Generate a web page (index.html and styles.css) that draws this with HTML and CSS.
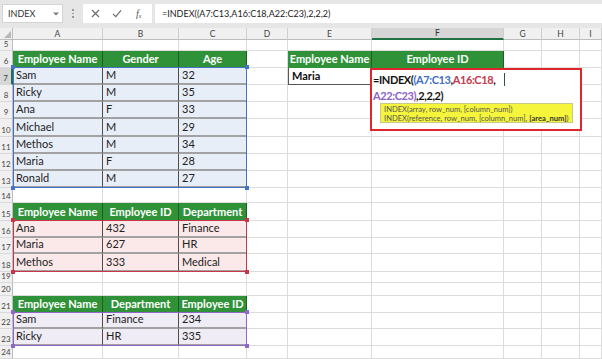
FILE: index.html
```html
<!DOCTYPE html>
<html>
<head>
<meta charset="utf-8">
<link rel="stylesheet" href="styles.css">
</head>
<body>
<div class="fbar">
  <div class="namebox"><span>INDEX</span><svg class="dd" width="6" height="4" viewBox="0 0 6 4"><path d="M0 0.5h6L3 3.5z"/></svg></div>
  <div class="grip"><i></i><i></i><i></i></div>
  <div class="btns">
    <svg class="ico" width="9" height="9" viewBox="0 0 9 9"><path d="M1 1L8 8M8 1L1 8"/></svg>
    <svg class="ico chk" width="10" height="9" viewBox="0 0 10 9"><path d="M1 4.8L3.8 7.6L9 1.4"/></svg>
    <span class="fx">f<sub>x</sub></span>
  </div>
  <div class="finput">=INDEX((A7:C13,A16:C18,A22:C23),2,2,2)</div>
</div>
<div class="sheet">
  <div class="corner"><svg width="13" height="12" viewBox="0 0 13 12"><path d="M11 3V10H4z"/></svg></div>
  <div class="ch">A</div><div class="ch">B</div><div class="ch">C</div><div class="ch">D</div><div class="ch">E</div><div class="ch on">F</div><div class="ch">G</div><div class="ch">H</div><div class="ch">I</div>

  <div class="rh">5</div><div class="c"></div><div class="c"></div><div class="c"></div><div class="c"></div><div class="c"></div><div class="c"></div><div class="c"></div><div class="c"></div><div class="c"></div>

  <div class="rh">6</div><div class="c hd">Employee Name</div><div class="c hd">Gender</div><div class="c hd">Age</div><div class="c"></div><div class="c hd">Employee Name</div><div class="c hd">Employee ID</div><div class="c"></div><div class="c"></div><div class="c"></div>

  <div class="rh on">7</div><div class="c d1">Sam</div><div class="c d1">M</div><div class="c d1">32</div><div class="c"></div><div class="c nm">Maria</div><div class="c"></div><div class="c"></div><div class="c"></div><div class="c"></div>
  <div class="rh">8</div><div class="c d1">Ricky</div><div class="c d1">M</div><div class="c d1">35</div><div class="c"></div><div class="c"></div><div class="c"></div><div class="c"></div><div class="c"></div><div class="c"></div>
  <div class="rh">9</div><div class="c d1">Ana</div><div class="c d1">F</div><div class="c d1">33</div><div class="c"></div><div class="c"></div><div class="c"></div><div class="c"></div><div class="c"></div><div class="c"></div>
  <div class="rh">10</div><div class="c d1">Michael</div><div class="c d1">M</div><div class="c d1">29</div><div class="c"></div><div class="c"></div><div class="c"></div><div class="c"></div><div class="c"></div><div class="c"></div>
  <div class="rh">11</div><div class="c d1">Methos</div><div class="c d1">M</div><div class="c d1">34</div><div class="c"></div><div class="c"></div><div class="c"></div><div class="c"></div><div class="c"></div><div class="c"></div>
  <div class="rh">12</div><div class="c d1">Maria</div><div class="c d1">F</div><div class="c d1">28</div><div class="c"></div><div class="c"></div><div class="c"></div><div class="c"></div><div class="c"></div><div class="c"></div>
  <div class="rh">13</div><div class="c d1">Ronald</div><div class="c d1">M</div><div class="c d1">27</div><div class="c"></div><div class="c"></div><div class="c"></div><div class="c"></div><div class="c"></div><div class="c"></div>

  <div class="rh">14</div><div class="c"></div><div class="c"></div><div class="c"></div><div class="c"></div><div class="c"></div><div class="c"></div><div class="c"></div><div class="c"></div><div class="c"></div>

  <div class="rh">15</div><div class="c hd">Employee Name</div><div class="c hd">Employee ID</div><div class="c hd">Department</div><div class="c"></div><div class="c"></div><div class="c"></div><div class="c"></div><div class="c"></div><div class="c"></div>
  <div class="rh">16</div><div class="c d2">Ana</div><div class="c d2">432</div><div class="c d2">Finance</div><div class="c"></div><div class="c"></div><div class="c"></div><div class="c"></div><div class="c"></div><div class="c"></div>
  <div class="rh">17</div><div class="c d2">Maria</div><div class="c d2">627</div><div class="c d2">HR</div><div class="c"></div><div class="c"></div><div class="c"></div><div class="c"></div><div class="c"></div><div class="c"></div>
  <div class="rh">18</div><div class="c d2">Methos</div><div class="c d2">333</div><div class="c d2">Medical</div><div class="c"></div><div class="c"></div><div class="c"></div><div class="c"></div><div class="c"></div><div class="c"></div>

  <div class="rh">19</div><div class="c"></div><div class="c"></div><div class="c"></div><div class="c"></div><div class="c"></div><div class="c"></div><div class="c"></div><div class="c"></div><div class="c"></div>
  <div class="rh">20</div><div class="c"></div><div class="c"></div><div class="c"></div><div class="c"></div><div class="c"></div><div class="c"></div><div class="c"></div><div class="c"></div><div class="c"></div>

  <div class="rh">21</div><div class="c hd">Employee Name</div><div class="c hd">Department</div><div class="c hd">Employee ID</div><div class="c"></div><div class="c"></div><div class="c"></div><div class="c"></div><div class="c"></div><div class="c"></div>
  <div class="rh">22</div><div class="c d3">Sam</div><div class="c d3">Finance</div><div class="c d3">234</div><div class="c"></div><div class="c"></div><div class="c"></div><div class="c"></div><div class="c"></div><div class="c"></div>
  <div class="rh">23</div><div class="c d3">Ricky</div><div class="c d3">HR</div><div class="c d3">335</div><div class="c"></div><div class="c"></div><div class="c"></div><div class="c"></div><div class="c"></div><div class="c"></div>

  <div class="rh">24</div><div class="c"></div><div class="c"></div><div class="c"></div><div class="c"></div><div class="c"></div><div class="c"></div><div class="c"></div><div class="c"></div><div class="c"></div>

  <div class="sel s1"><i class="tl"></i><i class="tr"></i><i class="bl"></i><i class="br"></i></div>
  <div class="sel s2"><i class="tl"></i><i class="tr"></i><i class="bl"></i><i class="br"></i></div>
  <div class="sel s3"><i class="tl"></i><i class="tr"></i><i class="bl"></i><i class="br"></i></div>

  <div class="editor">
    <div class="ftext">=INDEX(<span class="rb">(A7:C13</span>,<span class="rr">A16:C18</span>,<br><span class="rp">A22:C23)</span>,2,2,2)</div>
    <div class="tick"></div>
    <div class="tip">
      <div>INDEX(array, row_num, [column_num])</div>
      <div>INDEX(reference, row_num, [column_num], <b>[area_num]</b>)</div>
    </div>
  </div>
</div>
</body>
</html>
```

FILE: styles.css
```css
html, body {
  margin: 0;
  padding: 0;
  background: #fff;
}
body {
  width: 602px;
  height: 359px;
  overflow: hidden;
  font-family: Lato, "Liberation Sans", sans-serif;
}

/* formula bar */
.fbar {
  display: flex;
  height: 28px;
  box-sizing: border-box;
  padding: 4px 0 5px 2px;
  background: #e6e6e6;
}
.namebox {
  width: 61px;
  box-sizing: border-box;
  background: #fff;
  border: 1px solid #d4d4d4;
  display: flex;
  align-items: center;
  justify-content: space-between;
  padding: 0 3px 0 5px;
  font-size: 9px;
  color: #333;
}
.dd { fill: #777; }
.grip {
  width: 20px;
  display: flex;
  flex-direction: column;
  align-items: center;
  justify-content: center;
  gap: 2px;
}
.grip i {
  display: block;
  width: 1.5px;
  height: 1.5px;
  background: #9a9a9a;
}
.btns {
  width: 69px;
  box-sizing: border-box;
  background: #fff;
  display: flex;
  align-items: center;
  padding-left: 8px;
  gap: 12px;
  margin-right: 3px;
}
.ico {
  fill: none;
  stroke: #6a6a6a;
  stroke-width: 1.2;
}
.fx {
  font-family: "Liberation Serif", serif;
  font-style: italic;
  font-size: 10px;
  color: #555;
  margin-left: 2px;
}
.fx sub {
  font-size: 6px;
  vertical-align: -1px;
}
.finput {
  flex: 1;
  background: #fff;
  display: flex;
  align-items: center;
  padding-left: 7px;
  font-size: 9px;
  color: #222;
  white-space: nowrap;
}

/* sheet grid */
.sheet {
  position: relative;
  display: grid;
  grid-template-columns: 13px 90px 76px 68px 41px 84px 132px 38px 38px 22px;
  grid-template-rows: 12px 11px 17px 17px 17px 17px 18px 17px 17px 17px 15px 18px 17px 16px 18px 11px 13px 17px 16px 17px 13px;
}
.sheet > div {
  box-sizing: border-box;
}
.corner {
  background: #f0f0f0;
  border-right: 1px solid #bdbdbd;
  border-bottom: 1px solid #bdbdbd;
}
.corner svg {
  display: block;
  fill: #b8b8b8;
}
.ch {
  background: #f0f0f0;
  border-right: 1px solid #cfcfcf;
  border-bottom: 1px solid #bdbdbd;
  font-size: 8.5px;
  color: #444;
  display: flex;
  align-items: center;
  justify-content: center;
}
.ch.on {
  background: #d6d6d6;
  border-bottom: 2px solid #217346;
  color: #333;
}
.rh {
  background: #f0f0f0;
  border-right: 1px solid #bdbdbd;
  border-bottom: 1px solid #d9d9d9;
  font-size: 8px;
  line-height: 10px;
  color: #444;
  display: flex;
  align-items: flex-end;
  justify-content: center;
  padding-bottom: 1px;
}
.rh.on {
  background: #d6d6d6;
  border-right: 2px solid #217346;
}
.c {
  border-right: 1px solid #dcdcdc;
  border-bottom: 1px solid #dcdcdc;
  font-size: 11px;
  line-height: 14px;
  color: #222;
  display: flex;
  align-items: flex-end;
  padding: 0 0 1px 3px;
  white-space: nowrap;
  overflow: hidden;
}
.hd {
  background: #2f9239;
  color: #fff;
  font-weight: 700;
  justify-content: center;
  padding-left: 0;
  border-right-color: #1f5c26;
  border-bottom-color: #2f9239;
}
.d1, .d2, .d3 {
  border-bottom: 2px solid #a2a2a2;
  border-right-color: #4d4d4d;
}
.d1 { background: #e8eef8; }
.d2 { background: #fbe8e9; }
.d3 { background: #efecf6; }
.nm {
  font-weight: 700;
  color: #111;
  border-left: 1px solid #555;
  border-bottom-color: #555;
  border-right-color: #555;
}

/* range selections (overlays) */
.sel {
  position: absolute;
  top: -1px;
  left: 0;
  right: 0;
  bottom: 0;
  border: 1.5px solid;
}
.sel i {
  position: absolute;
  width: 4px;
  height: 4px;
  background: currentColor;
}
.sel .tl { left: -3px; top: -3px; }
.sel .tr { right: -3px; top: -3px; }
.sel .bl { left: -3px; bottom: -3px; }
.sel .br { right: -3px; bottom: -3px; }
.s1 { grid-row: 4 / 11; grid-column: 2 / 5; color: #4472c4; border-color: #4472c4; }
.s2 { grid-row: 13 / 16; grid-column: 2 / 5; color: #c8364a; border-color: #c8364a; }
.s3 { grid-row: 19 / 21; grid-column: 2 / 5; color: #8e67c9; border-color: #8e67c9; }

/* in-cell editor */
.editor {
  position: absolute;
  left: 370px;
  top: 40px;
  width: 212px;
  height: 63px;
  box-sizing: border-box;
  border: 2px solid #e0262d;
  background: #fff;
  padding: 2px 0 0 1px;
}
.ftext {
  font-weight: 700;
  font-size: 11px;
  line-height: 16px;
  letter-spacing: -0.4px;
  color: #111;
  white-space: nowrap;
}
.rb { color: #3d6fc6; }
.rr { color: #c23a4c; }
.rp { color: #8c62c6; }
.tick {
  position: absolute;
  left: 132px;
  top: 3px;
  width: 1px;
  height: 13px;
  background: #38523f;
}
.tip {
  position: absolute;
  left: 8px;
  top: 33px;
  width: 193px;
  height: 20px;
  box-sizing: border-box;
  background: #f5f53c;
  border: 1px solid #c8c88a;
  padding: 1px 0 0 3px;
  font-size: 7.6px;
  line-height: 8.5px;
  color: #555;
  white-space: nowrap;
}
.tip b {
  color: #333;
}
```
